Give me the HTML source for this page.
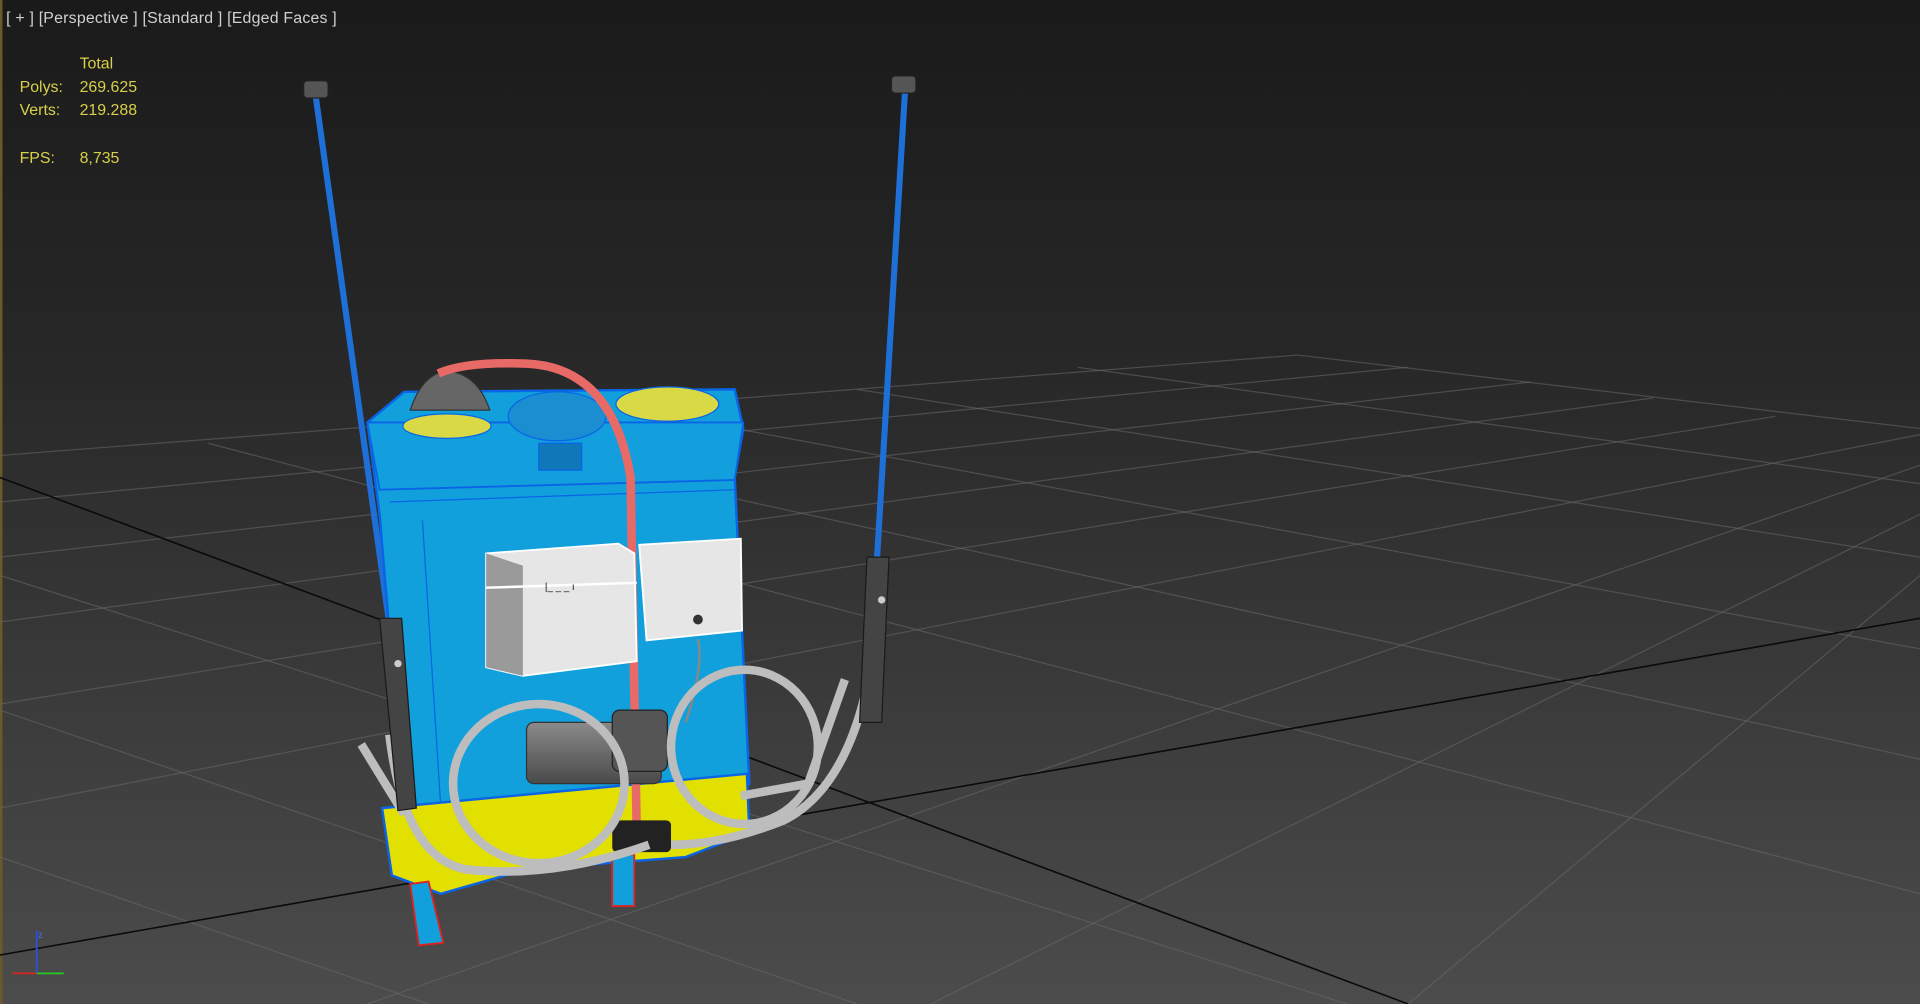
<!DOCTYPE html>
<html><head><meta charset="utf-8"><style>
html,body{margin:0;padding:0;width:1920px;height:1004px;overflow:hidden;background:#2a2a2a}
svg{display:block}
</style></head><body>
<svg width="1920" height="1004" viewBox="0 0 1568 820" preserveAspectRatio="none" xmlns="http://www.w3.org/2000/svg">
<defs>
<linearGradient id="bg" x1="0" y1="0" x2="0" y2="1">
<stop offset="0" stop-color="#1a1a1a"/><stop offset="0.35" stop-color="#272727"/><stop offset="1" stop-color="#4c4c4c"/>
</linearGradient>
<linearGradient id="mot" x1="0" y1="0" x2="0" y2="1"><stop offset="0" stop-color="#8a8a8a"/><stop offset="1" stop-color="#4a4a4a"/></linearGradient>
</defs>
<rect width="1568" height="820" fill="url(#bg)"/>
<rect x="0" y="0" width="2" height="820" fill="#6a5a2a"/>
<!-- grid -->
<g stroke="#6a6a6a" stroke-opacity="0.55" stroke-width="1" fill="none">
<path d="M0 372 L1060 290"/>
<path d="M0 410 L1150 300"/>
<path d="M0 455 L1250 312"/>
<path d="M0 508 L1350 325"/>
<path d="M0 575 L1450 340"/>
<path d="M0 660 L1568 355"/>
<path d="M300 820 L1568 380"/>
<path d="M760 820 L1568 420"/>
<path d="M1150 820 L1568 470"/>
<path d="M1060 290 L1568 350"/>
<path d="M880 300 L1568 395"/>
<path d="M700 318 L1568 455"/>
<path d="M520 335 L1568 530"/>
<path d="M340 350 L1568 620"/>
<path d="M170 362 L1568 730"/>
<path d="M0 470 L1100 820"/>
<path d="M0 580 L700 820"/>
<path d="M0 700 L350 820"/>
</g>
<g stroke="#0a0a0a" stroke-width="1.3" fill="none">
<path d="M0 390 L1150 820"/>
<path d="M0 780 L1568 505"/>
</g>
<!-- wands -->
<g stroke="#1e6fd6" stroke-width="5" stroke-linecap="round" fill="none">
<path d="M258 80 L318 510"/>
<path d="M739 76 L716 460"/>
</g>
<rect x="248" y="66" width="20" height="14" rx="3" fill="#555" stroke="#222"/>
<rect x="728" y="62" width="20" height="14" rx="3" fill="#555" stroke="#222"/>
<!-- tank -->
<path d="M300 345 L330 320 L600 318 L607 350 L600 390 L612 640 L600 650 L335 665 L325 600 L310 420 Z" fill="#11a0dc" stroke="#0a64e6" stroke-width="2"/>
<path d="M300 345 L607 345 L600 392 L310 400 Z" fill="#139fde" stroke="#0a64e6" stroke-width="1.5"/>
<path d="M318 410 L600 400" stroke="#0a64e6"/>
<path d="M345 425 L360 660" stroke="#0a64e6" fill="none"/>
<ellipse cx="545" cy="330" rx="42" ry="14" fill="#d9d946" stroke="#0a64e6"/>
<ellipse cx="365" cy="348" rx="36" ry="10" fill="#d9d946" stroke="#0a64e6"/>
<path d="M335 335 Q345 305 365 303 Q390 305 400 335 Z" fill="#666" stroke="#333"/>
<ellipse cx="455" cy="340" rx="40" ry="20" fill="#1a8ed0" stroke="#0a64e6"/>
<rect x="440" y="362" width="35" height="22" fill="#1078b8" stroke="#0a64e6"/>
<!-- yellow base -->
<path d="M312 660 L610 632 L612 680 L560 700 L430 710 L360 730 L320 715 Z" fill="#e2e000" stroke="#0a64e6" stroke-width="2"/>
<!-- legs -->
<path d="M335 722 L350 720 L362 770 L342 772 Z" fill="#11a0dc" stroke="#d22" stroke-width="1.5"/>
<path d="M500 698 L518 698 L518 740 L500 740 Z" fill="#11a0dc" stroke="#d22" stroke-width="1.5"/>
<!-- red hose -->
<path d="M358 305 Q380 295 430 297 Q500 300 515 390 L520 680" stroke="#e86a66" stroke-width="7" fill="none"/>
<!-- boxes -->
<path d="M397 452 L505 444 L518 452 L520 540 L427 552 L397 545 Z" fill="#e6e6e6" stroke="#fff" stroke-width="1.5"/>
<path d="M397 452 L427 462 L427 552 L397 545 Z" fill="#9a9a9a"/>
<path d="M397 480 L520 476" stroke="#fff" stroke-width="2"/>
<text x="445" y="482" font-family="Liberation Sans" font-size="8" fill="#111">|_ _ _ ı</text>
<path d="M522 445 L605 440 L606 515 L528 523 Z" fill="#e6e6e6" stroke="#fff" stroke-width="1.5"/>
<circle cx="570" cy="506" r="4" fill="#333"/>
<path d="M570 522 Q575 545 560 590" stroke="#888" stroke-width="2" fill="none"/>
<!-- motor -->
<rect x="430" y="590" width="110" height="50" rx="6" fill="url(#mot)" stroke="#333"/>
<rect x="500" y="580" width="45" height="50" rx="6" fill="#555" stroke="#222"/>
<rect x="500" y="670" width="48" height="26" rx="4" fill="#222"/>
<!-- hoses -->
<g stroke="#bdbdbd" stroke-width="7" fill="none">
<ellipse cx="440" cy="640" rx="70" ry="65"/>
<ellipse cx="608" cy="610" rx="60" ry="63"/>
<path d="M318 600 Q330 700 380 710 Q450 718 530 690"/>
<path d="M715 520 Q700 640 640 670 Q590 690 548 690"/>
<path d="M605 650 L660 640 L690 555"/>
<path d="M295 608 L330 665"/>
</g>
<!-- handles -->
<g fill="#444" stroke="#1a1a1a">
<path d="M310 505 L328 505 L340 660 L325 662 Z"/>
<path d="M708 455 L726 455 L720 590 L702 590 Z"/>
</g>
<circle cx="325" cy="542" r="3" fill="#ccc"/>
<circle cx="720" cy="490" r="3" fill="#ccc"/>
<!-- axis gizmo -->
<g stroke-width="1.5">
<path d="M30 795 L30 760" stroke="#2a52d8"/>
<path d="M30 795 L10 795" stroke="#d22"/>
<path d="M30 795 L52 795" stroke="#2c2"/>
</g>
<text x="31" y="766" font-family="Liberation Sans" font-size="8" fill="#4a6ae8">z</text>
<!-- text -->
<g font-family="Liberation Sans, DejaVu Sans, sans-serif" font-size="13">
<text x="5" y="19" fill="#d0d0d0" textLength="270" lengthAdjust="spacing">[ + ] [Perspective ] [Standard ] [Edged Faces ]</text>
<g fill="#d8d04a">
<text x="65" y="56">Total</text>
<text x="16" y="75">Polys:</text><text x="65" y="75">269.625</text>
<text x="16" y="94">Verts:</text><text x="65" y="94">219.288</text>
<text x="16" y="133">FPS:</text><text x="65" y="133">8,735</text>
</g>
</g>
</svg>
</body></html>
